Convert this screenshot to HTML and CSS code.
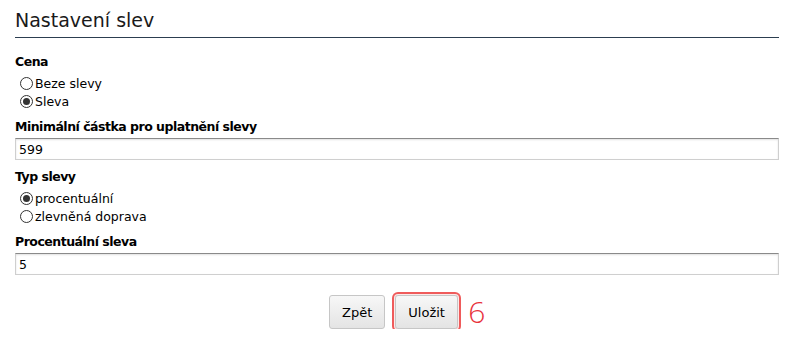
FILE: index.html
```html
<!DOCTYPE html>
<html lang="cs">
<head>
    <meta charset="UTF-8">
    <meta name="viewport" content="width=device-width, initial-scale=1.0">
    <title>Nastavení slev</title>
    <link rel="stylesheet" href="styles.css">
</head>
<body>
    <div class="page">
        <h1 class="page-title">Nastavení slev</h1>

        <form class="settings">
            <div class="group">
                <div class="group-label">Cena</div>
                <div class="options">
                    <label class="radio"><input type="radio" name="cena"> Beze slevy</label>
                    <label class="radio"><input type="radio" name="cena" checked> Sleva</label>
                </div>
            </div>

            <div class="group">
                <label class="group-label for-input" for="minimum">Minimální částka pro uplatnění slevy</label>
                <input class="text-input" type="text" id="minimum" value="599">
            </div>

            <div class="group">
                <div class="group-label">Typ slevy</div>
                <div class="options">
                    <label class="radio"><input type="radio" name="typ" checked> procentuální</label>
                    <label class="radio"><input type="radio" name="typ"> zlevněná doprava</label>
                </div>
            </div>

            <div class="group">
                <label class="group-label for-input" for="procenta">Procentuální sleva</label>
                <input class="text-input" type="text" id="procenta" value="5">
            </div>

            <div class="actions">
                <button type="button" class="btn">Zpět</button>
                <button type="button" class="btn btn-marked">Uložit<span class="marker">6</span></button>
            </div>
        </form>
    </div>
</body>
</html>
```

FILE: styles.css
```css
body {
    margin: 0;
    background-color: #fff;
    color: #000;
    font-family: "DejaVu Sans", Verdana, sans-serif;
    font-size: 12.5px;
}

.page {
    width: 764px;
    margin-left: 15px;
}

.page-title {
    margin: 0;
    padding: 8px 0 5px 0;
    font-size: 19px;
    font-weight: normal;
    line-height: 24px;
    color: #1a1a1a;
    border-bottom: 1px solid #2c3e50;
}

.settings {
    margin: 0;
    padding-top: 15px;
}

.group {
    margin-bottom: 8px;
}

.group-label {
    display: block;
    font-weight: bold;
    letter-spacing: -0.5px;
    line-height: 18px;
    margin-bottom: 3px;
}

.group-label.for-input {
    margin-bottom: 2px;
}

.options {
    margin-top: 2px;
}

.radio {
    display: flex;
    align-items: center;
    height: 18px;
    padding-left: 5px;
}

.radio input {
    appearance: none;
    -webkit-appearance: none;
    width: 13px;
    height: 13px;
    margin: 0 2px 0 0;
    border: 1px solid #333;
    border-radius: 50%;
    background: #fff;
    position: relative;
}

.radio input:checked::after {
    content: "";
    position: absolute;
    left: 2px;
    top: 2px;
    width: 7px;
    height: 7px;
    border-radius: 50%;
    background: #333;
}

.text-input {
    display: block;
    box-sizing: border-box;
    width: 100%;
    height: 22px;
    margin: 0;
    padding: 0 3px;
    font-family: inherit;
    font-size: 12.5px;
    color: #000;
    border: 1px solid #cfcfcf;
    border-top-color: #8a8a8a;
    box-shadow: inset 0 1px 2px rgba(0, 0, 0, 0.12);
    outline: none;
}

.actions {
    display: flex;
    justify-content: center;
    gap: 10px;
    margin-top: 20px;
    padding-right: 7px;
}

.btn {
    position: relative;
    height: 34px;
    padding: 0 12px;
    font-family: inherit;
    font-size: 13px;
    color: #000;
    background: linear-gradient(#f7f7f7, #e4e4e4);
    border: 1px solid #c6c6c6;
    border-radius: 3px;
}

.btn-marked {
    box-shadow: 0 0 0 1px #fbeaea, 0 0 0 3px #ef5b5b;
}

.marker {
    position: absolute;
    left: 72px;
    top: 1px;
    font-family: "Open Sans", sans-serif;
    font-size: 30px;
    font-weight: 300;
    line-height: 30px;
    color: #e8323c;
}
```
